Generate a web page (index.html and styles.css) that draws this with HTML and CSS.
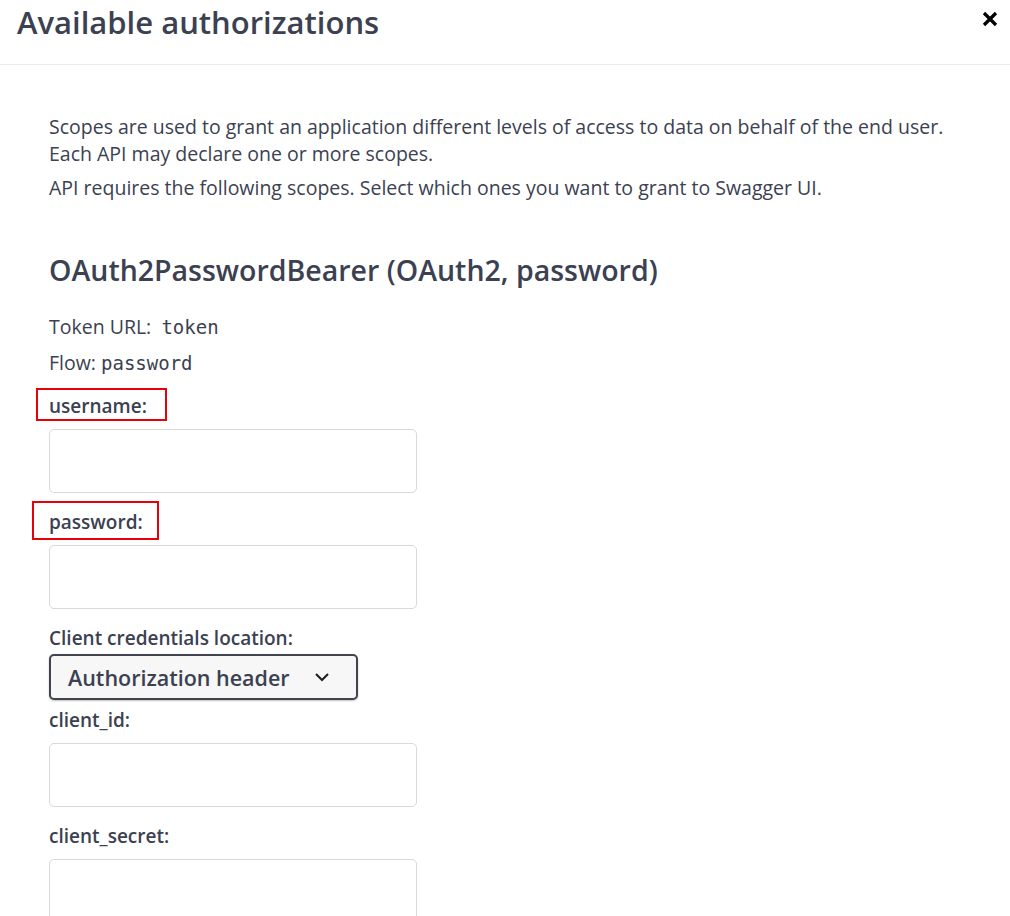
FILE: index.html
```html
<!DOCTYPE html>
<html>
<head>
<meta charset="utf-8">
<link rel="stylesheet" href="styles.css">
</head>
<body>
<div class="modal">
  <div class="modal-header">
    <h3 class="modal-title">Available authorizations</h3>
    <button class="close" aria-label="Close">
      <svg width="16" height="16" viewBox="0 0 16 16"><path d="M2 2 L14 14 M14 2 L2 14" stroke="#000" stroke-width="3.2" stroke-linecap="butt"/></svg>
    </button>
  </div>
  <div class="modal-body">
    <div class="scopes-desc">
      <p>Scopes are used to grant an application different levels of access to data on behalf of the end user. Each API may declare one or more scopes.</p>
      <p>API requires the following scopes. Select which ones you want to grant to Swagger UI.</p>
    </div>
    <div class="auth-container">
      <h4 class="auth-title">OAuth2PasswordBearer (OAuth2, password)</h4>
      <p class="meta">Token URL:&nbsp; <code>token</code></p>
      <p class="meta">Flow: <code>password</code></p>
      <div class="fields">
        <div class="field">
          <label class="label"><span class="mark mark-user"></span>username:</label>
          <input class="input" type="text">
        </div>
        <div class="field">
          <label class="label"><span class="mark mark-pass"></span>password:</label>
          <input class="input" type="password">
        </div>
        <div class="field field-select">
          <label class="label">Client credentials location:</label>
          <div class="select">
            <span>Authorization header</span>
            <svg width="16" height="10" viewBox="0 0 16 10"><path d="M2 2 L8 8 L14 2" fill="none" stroke="#222" stroke-width="2.2"/></svg>
          </div>
        </div>
        <div class="field">
          <label class="label">client_id:</label>
          <input class="input" type="text">
        </div>
        <div class="field">
          <label class="label">client_secret:</label>
          <input class="input" type="password">
        </div>
      </div>
    </div>
  </div>
</div>
</body>
</html>
```

FILE: styles.css
```css
html, body {
  margin: 0;
  padding: 0;
  background: #fff;
}
body {
  font-family: "Open Sans", "Noto Sans", sans-serif;
  color: #3b4151;
  overflow: hidden;
}
.modal-header {
  height: 65px;
  border-bottom: 1px solid #ebebeb;
  display: flex;
  align-items: flex-start;
  justify-content: space-between;
  box-sizing: border-box;
}
.modal-title {
  margin: 0;
  padding: 2px 0 0 17px;
  font-size: 31px;
  font-weight: 600;
  line-height: 40px;
  color: #3b4151;
}
.close {
  border: 0;
  background: none;
  padding: 0;
  margin: 11px 12px 0 0;
  width: 16px;
  height: 16px;
  cursor: pointer;
}
.modal-body {
  padding: 48px 0 0 49px;
}
.scopes-desc p {
  margin: 0 0 7px;
  font-size: 19.5px;
  line-height: 27px;
  width: 915px;
}
.auth-container {
  padding-top: 44px;
}
.auth-title {
  margin: 0 0 25px;
  font-size: 28.5px;
  font-weight: 600;
  line-height: 36px;
}
.meta {
  margin: 0 0 8px;
  font-size: 19.5px;
  line-height: 27px;
}
.meta code {
  font-family: "DejaVu Sans Mono", monospace;
  font-size: 19px;
}
.fields {
  padding-top: 9px;
}
.field {
  display: flex;
  flex-direction: column;
  align-items: flex-start;
}
.label {
  position: relative;
  font-size: 19px;
  font-weight: 600;
  line-height: 24px;
  margin: 0 0 11px;
}
.field-select .label {
  margin-bottom: 4px;
}
.mark {
  position: absolute;
  border: 2px solid #e8000b;
  box-sizing: border-box;
}
.mark-user {
  left: -13px;
  top: -6px;
  width: 131px;
  height: 33px;
}
.mark-pass {
  left: -17px;
  top: -9px;
  width: 127px;
  height: 39px;
}
.input {
  box-sizing: border-box;
  width: 368px;
  height: 64px;
  border: 1px solid #d9d9d9;
  border-radius: 5px;
  margin: 0 0 17px;
  padding: 8px 10px;
  font-size: 16px;
  background: #fff;
}
.select {
  box-sizing: border-box;
  width: 309px;
  height: 46px;
  border: 2px solid #41444e;
  border-radius: 5px;
  background: #f7f7f7;
  box-shadow: 0 1px 2px 0 rgba(0,0,0,.25);
  display: flex;
  align-items: center;
  justify-content: space-between;
  padding: 0 26px 0 17px;
  font-size: 21.5px;
  font-weight: 600;
  color: #3b4151;
  margin: 0 0 8px;
}
```
